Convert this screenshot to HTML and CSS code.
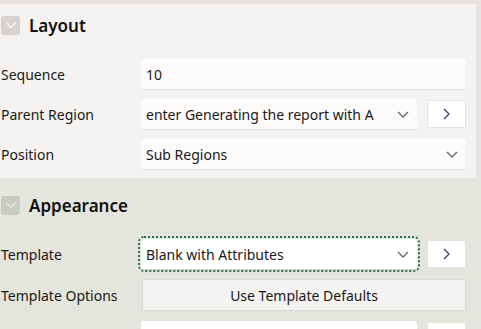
FILE: index.html
```html
<!DOCTYPE html>
<html lang="en">

<head>
  <meta charset="UTF-8">
  <title>Region Properties</title>
  <link rel="stylesheet" href="styles.css">
</head>

<body>
  <div class="top-wrap">
    <div class="panel">
      <div class="group-head">
        <span class="toggle">
          <svg width="12" height="8" viewBox="0 0 12 8"><path d="M1 1.5 L6 6.5 L11 1.5" fill="none" stroke="#f4f3f1" stroke-width="1.4"/></svg>
        </span>
        <h2>Layout</h2>
      </div>
      <div class="row">
        <label>Sequence</label>
        <div class="field"><input class="text-in" type="text" value="10"></div>
      </div>
      <div class="row">
        <label>Parent Region</label>
        <div class="field">
          <div class="select">
            <span class="val">enter Generating the report with A</span>
            <svg class="caret" width="12" height="7" viewBox="0 0 12 7"><path d="M1 1 L6 6 L11 1" fill="none" stroke="#6b6662" stroke-width="1.3"/></svg>
          </div>
          <button class="go" type="button">
            <svg width="7" height="12" viewBox="0 0 7 12"><path d="M1 1 L6 6 L1 11" fill="none" stroke="#3c3a6a" stroke-width="1.3"/></svg>
          </button>
        </div>
      </div>
      <div class="row">
        <label>Position</label>
        <div class="field">
          <div class="select">
            <span class="val">Sub Regions</span>
            <svg class="caret" width="12" height="7" viewBox="0 0 12 7"><path d="M1 1 L6 6 L11 1" fill="none" stroke="#6b6662" stroke-width="1.3"/></svg>
          </div>
        </div>
      </div>
    </div>
  </div>

  <div class="section">
    <div class="group-head">
      <span class="toggle alt">
        <svg width="12" height="8" viewBox="0 0 12 8"><path d="M1 1.5 L6 6.5 L11 1.5" fill="none" stroke="#e4e6dd" stroke-width="1.4"/></svg>
      </span>
      <h2>Appearance</h2>
    </div>
    <div class="row">
      <label>Template</label>
      <div class="field">
        <div class="select focused">
          <span class="val">Blank with Attributes</span>
          <svg class="caret" width="12" height="7" viewBox="0 0 12 7"><path d="M1 1 L6 6 L11 1" fill="none" stroke="#6b6662" stroke-width="1.3"/></svg>
        </div>
        <button class="go" type="button">
          <svg width="7" height="12" viewBox="0 0 7 12"><path d="M1 1 L6 6 L1 11" fill="none" stroke="#3c3a6a" stroke-width="1.3"/></svg>
        </button>
      </div>
    </div>
    <div class="row">
      <label>Template Options</label>
      <div class="field">
        <button class="wide" type="button">Use Template Defaults</button>
      </div>
    </div>
    <div class="row">
      <label></label>
      <div class="field">
        <div class="select plain"></div>
        <button class="go" type="button"></button>
      </div>
    </div>
  </div>
</body>

</html>
```

FILE: styles.css
```css
body {
  margin: 0;
  background-color: #e4e6dd;
  font-family: 'Noto Sans', 'Open Sans', sans-serif;
  font-size: 14px;
  color: #1b1917;
  overflow: hidden;
}

.top-wrap {
  background-color: #e6e3e0;
  padding: 4px 5px 1px 0;
}

.panel {
  background-color: #f4f3f1;
  padding: 11px 10px 9px 0;
  display: flex;
  flex-direction: column;
  gap: 10px;
}

.section {
  padding: 16px 15px 0 0;
  display: flex;
  flex-direction: column;
  gap: 10px;
}

.group-head {
  display: flex;
  align-items: center;
  height: 20px;
  margin-bottom: 14px;
}

.toggle {
  width: 19px;
  height: 19px;
  margin-left: 1px;
  border-radius: 3px;
  background-color: #d6d3cf;
  display: flex;
  align-items: center;
  justify-content: center;
}

.toggle.alt {
  background-color: #c9cbc2;
}

h2 {
  margin: 0 0 0 9px;
  font-size: 17px;
  font-weight: 600;
  color: #131110;
}

.row {
  display: flex;
  align-items: center;
}

.row label {
  width: 140px;
  padding-left: 1px;
  white-space: nowrap;
}

.field {
  flex: 1;
  display: flex;
  gap: 10px;
}

.text-in {
  width: 100%;
  height: 30px;
  box-sizing: border-box;
  border: none;
  border-radius: 3px;
  padding: 0 5px;
  font: inherit;
  color: #1b1917;
  background-color: #fcfbfa;
  box-shadow: 0 1px 1px rgba(0, 0, 0, 0.08);
}

.select {
  flex: 1;
  height: 30px;
  box-sizing: border-box;
  border-radius: 3px;
  padding: 0 8px 0 5px;
  background-color: #fcfbfa;
  box-shadow: 0 1px 1px rgba(0, 0, 0, 0.08);
  display: flex;
  align-items: center;
  justify-content: space-between;
  overflow: hidden;
}

.select .val {
  white-space: nowrap;
  overflow: hidden;
}

.select .caret {
  flex-shrink: 0;
  margin-left: 10px;
}

.select.focused {
  background-color: #ffffff;
  outline: 2px dotted #2e7650;
  outline-offset: 1px;
}

.select.plain {
  background-color: #ffffff;
}

.go {
  width: 39px;
  height: 28px;
  margin-top: 1px;
  border: 1px solid #e6e3de;
  border-radius: 2px;
  background-color: #ffffff;
  display: flex;
  align-items: center;
  justify-content: center;
  padding: 0;
}

.wide {
  flex: 1;
  height: 32px;
  margin-left: 1px;
  border: 1px solid #dcdad5;
  border-radius: 2px;
  background-color: #f4f3f1;
  font: inherit;
  color: #1b1917;
}
```
